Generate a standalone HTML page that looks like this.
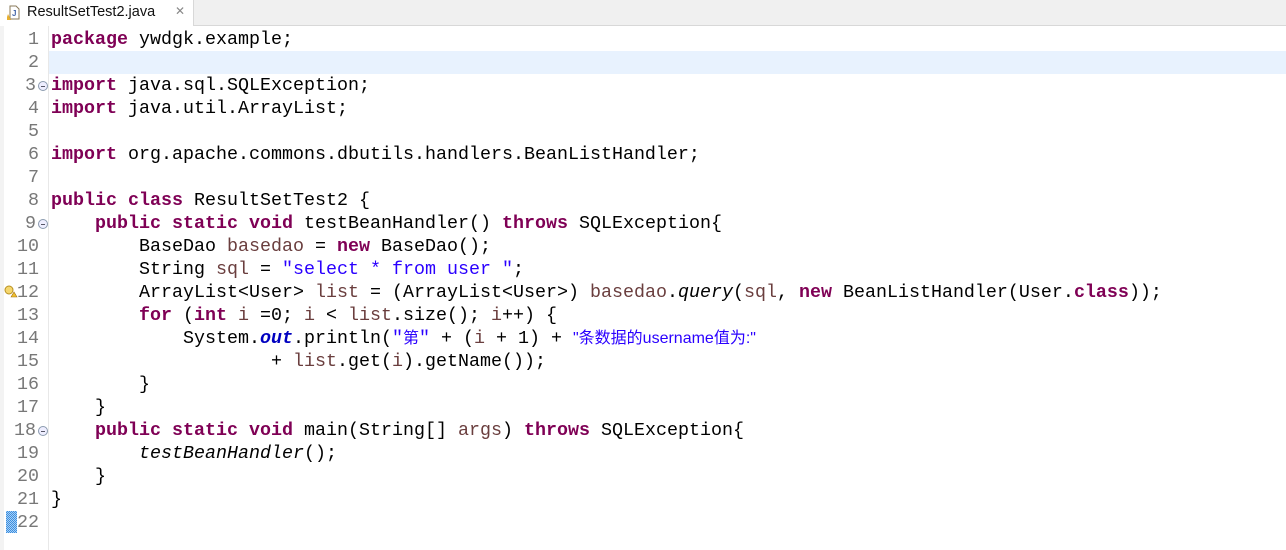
<!DOCTYPE html>
<html><head><meta charset="utf-8"><style>
html,body{margin:0;padding:0;width:1286px;height:550px;overflow:hidden;background:#fff;}
.tabbar{position:absolute;left:0;top:0;width:1286px;height:25px;background:#f0f0f0;border-bottom:1px solid #d8d8d8;}
.tab{position:absolute;left:0;top:0;width:193px;height:26px;background:#fff;border-right:1px solid #d8d8d8;font-family:"Liberation Sans",sans-serif;font-size:14.5px;color:#111;}
.tab .t{position:absolute;left:27px;top:4px;}
.tab .x{position:absolute;left:175px;top:4px;font-size:12px;color:#888;}
.gut{position:absolute;left:0;top:26px;width:48px;height:524px;background:#fff;border-right:1px solid #e8e8e8;}
.gut:before{content:"";position:absolute;left:0;top:0;width:4px;height:524px;background:#f3f3f3;}
.hl{position:absolute;left:49px;top:51px;width:1237px;height:23px;background:#e8f2fe;}
.code{position:absolute;left:0;top:28px;width:1286px;height:522px;font-family:"Liberation Mono",monospace;font-size:18.33px;line-height:23px;white-space:pre;color:#000;}
.ln{position:absolute;left:0;width:39px;text-align:right;color:#787878;}
.ln.fd{width:36px;}
.l{position:absolute;left:51px;}
.k{color:#7f0055;font-weight:bold;}
.v{color:#6a3e3e;}
.s{color:#2a00ff;}
.f{color:#0000c0;font-weight:bold;font-style:italic;}
.i{font-style:italic;}
.cj{font-family:"Liberation Sans","Noto Sans CJK SC",sans-serif;font-size:16px;}
.fold{position:absolute;left:38px;width:8px;height:8px;border:1px solid #8a9aae;border-radius:50%;background:#eef;font-size:0;}
.fold:after{content:"";position:absolute;left:2px;top:3.5px;width:4px;height:1px;background:#556;}
</style></head><body>
<div class="tabbar"></div>
<div class="tab">
<svg style="position:absolute;left:7px;top:5px" width="14" height="16" viewBox="0 0 14 16"><path d="M3 1h6l3 3v10H3z" fill="#fff" stroke="#8a7a5a"/><text x="5" y="11" font-size="8" font-family="Liberation Sans" fill="#4466aa" font-weight="bold">J</text><path d="M1 9l3 6H-1z" fill="#e8b030"/></svg>
<span class="t">ResultSetTest2.java</span><span class="x">✕</span></div>
<div class="gut"></div>
<div class="hl"></div>
<div style="position:absolute;left:6px;top:511px;width:11px;height:22px;background:repeating-conic-gradient(#3b8ee0 0 25%,#a8d0f5 0 50%) 0 0/2px 2px;"></div>
<svg style="position:absolute;left:4px;top:284px" width="14" height="14" viewBox="0 0 14 14"><circle cx="5" cy="6" r="4" fill="#f5d76e" stroke="#b89020"/><path d="M7 13l3-5 3 5z" fill="#f0c030" stroke="#a07010" stroke-width=".6"/></svg>
<div class="fold" style="top:81px"></div>
<div class="fold" style="top:219px"></div>
<div class="fold" style="top:426px"></div>
<div class="code">
<div class="ln" style="top:0">1</div><div class="l" style="top:0"><span class="k">package</span> ywdgk.example;</div>
<div class="ln" style="top:23px">2</div>
<div class="ln fd" style="top:46px">3</div><div class="l" style="top:46px"><span class="k">import</span> java.sql.SQLException;</div>
<div class="ln" style="top:69px">4</div><div class="l" style="top:69px"><span class="k">import</span> java.util.ArrayList;</div>
<div class="ln" style="top:92px">5</div>
<div class="ln" style="top:115px">6</div><div class="l" style="top:115px"><span class="k">import</span> org.apache.commons.dbutils.handlers.BeanListHandler;</div>
<div class="ln" style="top:138px">7</div>
<div class="ln" style="top:161px">8</div><div class="l" style="top:161px"><span class="k">public</span> <span class="k">class</span> ResultSetTest2 {</div>
<div class="ln fd" style="top:184px">9</div><div class="l" style="top:184px">    <span class="k">public</span> <span class="k">static</span> <span class="k">void</span> testBeanHandler() <span class="k">throws</span> SQLException{</div>
<div class="ln" style="top:207px">10</div><div class="l" style="top:207px">        BaseDao <span class="v">basedao</span> = <span class="k">new</span> BaseDao();</div>
<div class="ln" style="top:230px">11</div><div class="l" style="top:230px">        String <span class="v">sql</span> = <span class="s">"select * from user "</span>;</div>
<div class="ln" style="top:253px">12</div><div class="l" style="top:253px">        ArrayList&lt;User&gt; <span class="v">list</span> = (ArrayList&lt;User&gt;) <span class="v">basedao</span>.<span class="i">query</span>(<span class="v">sql</span>, <span class="k">new</span> BeanListHandler(User.<span class="k">class</span>));</div>
<div class="ln" style="top:276px">13</div><div class="l" style="top:276px">        <span class="k">for</span> (<span class="k">int</span> <span class="v">i</span> =0; <span class="v">i</span> &lt; <span class="v">list</span>.size(); <span class="v">i</span>++) {</div>
<div class="ln" style="top:299px">14</div><div class="l" style="top:299px">            System.<span class="f">out</span>.println(<span class="s">"<span class="cj">第</span>"</span> + (<span class="v">i</span> + 1) + <span class="s cj">"条数据的username值为:"</span></div>
<div class="ln" style="top:322px">15</div><div class="l" style="top:322px">                    + <span class="v">list</span>.get(<span class="v">i</span>).getName());</div>
<div class="ln" style="top:345px">16</div><div class="l" style="top:345px">        }</div>
<div class="ln" style="top:368px">17</div><div class="l" style="top:368px">    }</div>
<div class="ln fd" style="top:391px">18</div><div class="l" style="top:391px">    <span class="k">public</span> <span class="k">static</span> <span class="k">void</span> main(String[] <span class="v">args</span>) <span class="k">throws</span> SQLException{</div>
<div class="ln" style="top:414px">19</div><div class="l" style="top:414px">        <span class="i">testBeanHandler</span>();</div>
<div class="ln" style="top:437px">20</div><div class="l" style="top:437px">    }</div>
<div class="ln" style="top:460px">21</div><div class="l" style="top:460px">}</div>
<div class="ln" style="top:483px">22</div>
</div>
</body></html>
